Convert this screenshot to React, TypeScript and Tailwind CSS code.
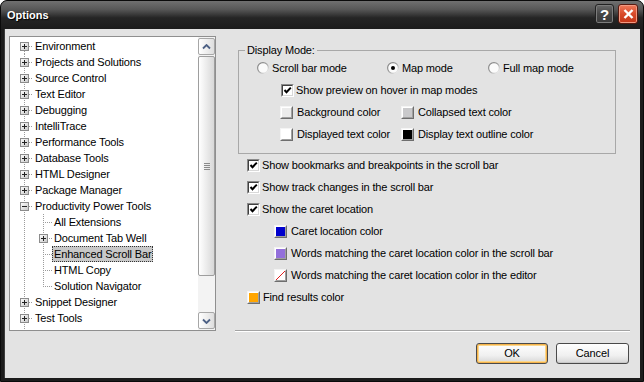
import React from "react";

type TreeNode = {
  label: string;
  level: 0 | 1;
  exp?: "plus" | "minus";
  first?: boolean;
  lastChild?: boolean;
  selected?: boolean;
};

const tree: TreeNode[] = [
  { label: "Environment", level: 0, exp: "plus", first: true },
  { label: "Projects and Solutions", level: 0, exp: "plus" },
  { label: "Source Control", level: 0, exp: "plus" },
  { label: "Text Editor", level: 0, exp: "plus" },
  { label: "Debugging", level: 0, exp: "plus" },
  { label: "IntelliTrace", level: 0, exp: "plus" },
  { label: "Performance Tools", level: 0, exp: "plus" },
  { label: "Database Tools", level: 0, exp: "plus" },
  { label: "HTML Designer", level: 0, exp: "plus" },
  { label: "Package Manager", level: 0, exp: "plus" },
  { label: "Productivity Power Tools", level: 0, exp: "minus" },
  { label: "All Extensions", level: 1 },
  { label: "Document Tab Well", level: 1, exp: "plus" },
  { label: "Enhanced Scroll Bar", level: 1, selected: true },
  { label: "HTML Copy", level: 1 },
  { label: "Solution Navigator", level: 1, lastChild: true },
  { label: "Snippet Designer", level: 0, exp: "plus" },
  { label: "Test Tools", level: 0, exp: "plus" },
];

const DOT = "#9c9c9c";

function Expander({ x, minus }: { x: number; minus?: boolean }) {
  // 9x9 box centred on column x
  return (
    <g>
      <defs>
        <linearGradient id="expg" x1="0" y1="0" x2="1" y2="1">
          <stop offset="0" stopColor="#ffffff" />
          <stop offset="1" stopColor="#c6c6c6" />
        </linearGradient>
      </defs>
      <rect x={x - 3.5} y={4.5} width={8} height={8} fill="url(#expg)" stroke="#8c8c8c" />
      <line x1={x - 2} y1={8.5} x2={x + 3} y2={8.5} stroke="#222" />
      {!minus && <line x1={x + 0.5} y1={6} x2={x + 0.5} y2={11} stroke="#222" />}
    </g>
  );
}

function Guide({ node }: { node: TreeNode }) {
  const w = node.level === 0 ? 23 : 42;
  return (
    <svg width={w} height={16} className="shrink-0" shapeRendering="crispEdges">
      {/* root line */}
      <line x1={14.5} y1={node.first ? 9 : 0} x2={14.5} y2={16} stroke={DOT} strokeDasharray="1 1" />
      {node.level === 0 && <line x1={19} y1={8.5} x2={23} y2={8.5} stroke={DOT} strokeDasharray="1 1" />}
      {node.level === 1 && (
        <>
          <line x1={33.5} y1={0} x2={33.5} y2={node.lastChild ? 9 : 16} stroke={DOT} strokeDasharray="1 1" />
          <line x1={35} y1={8.5} x2={42} y2={8.5} stroke={DOT} strokeDasharray="1 1" />
        </>
      )}
      {node.exp && <Expander x={node.level === 0 ? 14 : 33} minus={node.exp === "minus"} />}
    </svg>
  );
}

function Arrow({ down }: { down?: boolean }) {
  return (
    <svg width="9" height="6" viewBox="0 0 9 6">
      <path
        d={down ? "M1 1.5 L4.5 5 L8 1.5" : "M1 4.5 L4.5 1 L8 4.5"}
        fill="none"
        stroke="#4d6185"
        strokeWidth="1.8"
      />
    </svg>
  );
}

function ScrollButton({ down }: { down?: boolean }) {
  return (
    <div className="flex h-[17px] items-center justify-center rounded-[2px] border border-[#a7a7a7] bg-[linear-gradient(90deg,#ffffff,#dedede)]">
      <Arrow down={down} />
    </div>
  );
}

function TreePanel() {
  return (
    <div className="flex h-[295px] w-[207px] border border-[#8f8f8f] bg-white">
      <div className="flex-1 overflow-hidden pt-[1px]">
        {tree.map((n) => (
          <div key={n.label} className="flex h-[16px] items-center">
            <Guide node={n} />
            <span
              className={`h-[16px] whitespace-nowrap px-[1px] leading-[14px] border ${
                n.selected ? "border-dotted border-[#333] bg-[#c8c8c8]" : "border-transparent"
              }`}
            >
              {n.label}
            </span>
          </div>
        ))}
        <div className="flex h-[16px]">
          <svg width={23} height={16} shapeRendering="crispEdges">
            <line x1={14.5} y1={0} x2={14.5} y2={16} stroke={DOT} strokeDasharray="1 1" />
          </svg>
        </div>
      </div>
      <div className="flex w-[17px] flex-col bg-[#f3f3f3] py-[1px]">
        <ScrollButton />
        <div className="flex-1 pt-[1px] pb-[36px]">
          <div className="flex h-full items-center justify-center rounded-[2px] border border-[#9e9e9e] bg-[linear-gradient(90deg,#ffffff,#d8d8d8)]">
            <div className="flex flex-col gap-[1px]">
              <div className="h-px w-[6px] bg-[#8a8a8a]" />
              <div className="h-px w-[6px] bg-[#8a8a8a]" />
              <div className="h-px w-[6px] bg-[#8a8a8a]" />
              <div className="h-px w-[6px] bg-[#8a8a8a]" />
            </div>
          </div>
        </div>
        <ScrollButton down />
      </div>
    </div>
  );
}

function CheckBox({ checked }: { checked?: boolean }) {
  return (
    <div className="h-[13px] w-[13px] shrink-0 border border-t-[#8a8a8a] border-l-[#8a8a8a] border-b-white border-r-white">
      <div className="h-full w-full border border-t-[#404040] border-l-[#404040] border-b-[#d8d8d8] border-r-[#d8d8d8] bg-white">
        {checked && (
          <svg width="9" height="9" viewBox="0 0 9 9">
            <path d="M1.5 4 L3.5 6.2 L7.8 1.6" fill="none" stroke="#000" strokeWidth="2" />
          </svg>
        )}
      </div>
    </div>
  );
}

function Radio({ checked }: { checked?: boolean }) {
  return (
    <svg width="12" height="12" viewBox="0 0 12 12" className="shrink-0">
      <defs>
        <linearGradient id="rad" x1="0" y1="0" x2="1" y2="1">
          <stop offset="0" stopColor="#7a7a7a" />
          <stop offset="0.5" stopColor="#a0a0a0" />
          <stop offset="1" stopColor="#ffffff" />
        </linearGradient>
      </defs>
      <circle cx="6" cy="6" r="5.4" fill="#fbfbfb" stroke="url(#rad)" strokeWidth="1.2" />
      {checked && <circle cx="6" cy="6" r="2" fill="#000" />}
    </svg>
  );
}

function Swatch({ color, transparent }: { color: string; transparent?: boolean }) {
  return (
    <div className="h-[13px] w-[13px] shrink-0 border border-t-[#f4f4f4] border-l-[#f4f4f4] border-b-[#6e6e6e] border-r-[#6e6e6e]">
      <div
        className="h-full w-full border border-t-white border-l-white border-b-[#a0a0a0] border-r-[#a0a0a0]"
        style={{ background: color }}
      >
        {transparent && (
          <svg width="9" height="9" viewBox="0 0 9 9">
            <line x1="0" y1="9" x2="9" y2="0" stroke="#e02020" strokeWidth="1" />
          </svg>
        )}
      </div>
    </div>
  );
}

function Button({ label, isDefault }: { label: string; isDefault?: boolean }) {
  return (
    <div
      className={`flex h-[21px] items-center justify-center rounded-[3px] border border-[#4a4a4a] bg-[linear-gradient(#ffffff,#f0f0f0_60%,#d6d6d6)] ${
        isDefault
          ? "w-[72px] shadow-[inset_0_0_0_1px_#f5b24a,inset_0_0_0_2px_#fbd88e]"
          : "w-[73px] shadow-[inset_0_-1px_0_#c8c8c8]"
      }`}
    >
      {label}
    </div>
  );
}

function TitleBar() {
  return (
    <div className="flex h-[28px] shrink-0 items-center bg-[linear-gradient(#707070,#575757_30%,#3a3a3a_48%,#252525_60%,#1c1c1c)] pl-[6px] pr-[5px]">
      <span className="flex-1 text-[11px] font-bold tracking-normal text-white [text-shadow:1px_1px_1px_#000]">
        Options
      </span>
      <div className="flex gap-[4px] pb-[2px]">
        <div className="flex h-[20px] w-[19px] items-center justify-center rounded-[3px] border border-[#222] bg-[linear-gradient(#6a6a6a,#464646_50%,#3a3a3a)] text-[15px] font-bold leading-none text-white shadow-[inset_0_0_0_1px_#7c7c7c]">
          ?
        </div>
        <div className="flex h-[20px] w-[20px] items-center justify-center rounded-[3px] border border-[#5a1a10] bg-[linear-gradient(#ee7a5c,#d94a2a_50%,#c23518)] shadow-[inset_0_0_0_1px_#f29a82]">
          <svg width="11" height="10" viewBox="0 0 11 10">
            <path d="M1.5 1 L9.5 9 M9.5 1 L1.5 9" stroke="#fff" strokeWidth="2.4" />
          </svg>
        </div>
      </div>
    </div>
  );
}

export default function App() {
  return (
    <div className="h-[382px] w-[644px] bg-white font-['Liberation_Sans',Arial,sans-serif] text-[11px] tracking-[-0.15px] text-black">
      <div className="flex h-full flex-col overflow-hidden rounded-t-[7px] border border-[#0a0a0a] bg-[#1c1c1c]">
        <TitleBar />
        <div className="mx-[3px] mb-[3px] flex flex-1 border-l border-[#3c3c3c] bg-[#e3e3e3]">
          <div className="pt-[7px] pl-[4px]">
            <TreePanel />
          </div>

          <div className="ml-[19px] flex w-[395px] flex-col pt-[15px]">
            <fieldset className="ml-[3px] w-[378px] border border-[#a8a8a8] pb-[8px]">
              <legend className="ml-[6px] px-[2px] leading-[13px]">Display Mode:</legend>
              <div className="flex h-[22px] items-center pl-[18px]">
                <div className="flex w-[130px] items-center gap-[3px]">
                  <Radio />
                  <span>Scroll bar mode</span>
                </div>
                <div className="flex w-[101px] items-center gap-[3px]">
                  <Radio checked />
                  <span>Map mode</span>
                </div>
                <div className="flex items-center gap-[3px]">
                  <Radio />
                  <span>Full map mode</span>
                </div>
              </div>
              <div className="flex h-[22px] items-center gap-[2px] pl-[42px]">
                <CheckBox checked />
                <span>Show preview on hover in map modes</span>
              </div>
              <div className="flex h-[22px] items-center pl-[41px]">
                <div className="flex w-[121px] items-center gap-[4px]">
                  <Swatch color="#ebebeb" />
                  <span>Background color</span>
                </div>
                <div className="flex items-center gap-[4px]">
                  <Swatch color="#c9c9cb" />
                  <span>Collapsed text color</span>
                </div>
              </div>
              <div className="flex h-[22px] items-center pl-[41px]">
                <div className="flex w-[121px] items-center gap-[4px]">
                  <Swatch color="#ffffff" />
                  <span>Displayed text color</span>
                </div>
                <div className="flex items-center gap-[4px]">
                  <Swatch color="#000000" />
                  <span>Display text outline color</span>
                </div>
              </div>
            </fieldset>

            <div className="flex flex-col">
              <div className="flex h-[22px] items-center gap-[2px] pl-[12px]">
                <CheckBox checked />
                <span>Show bookmarks and breakpoints in the scroll bar</span>
              </div>
              <div className="flex h-[22px] items-center gap-[2px] pl-[12px]">
                <CheckBox checked />
                <span>Show track changes in the scroll bar</span>
              </div>
              <div className="flex h-[22px] items-center gap-[2px] pl-[12px]">
                <CheckBox checked />
                <span>Show the caret location</span>
              </div>
              <div className="flex h-[22px] items-center gap-[4px] pl-[39px]">
                <Swatch color="#0000cd" />
                <span>Caret location color</span>
              </div>
              <div className="flex h-[22px] items-center gap-[4px] pl-[39px]">
                <Swatch color="#9370db" />
                <span>Words matching the caret location color in the scroll bar</span>
              </div>
              <div className="flex h-[22px] items-center gap-[4px] pl-[39px]">
                <Swatch color="#ffffff" transparent />
                <span>Words matching the caret location color in the editor</span>
              </div>
              <div className="flex h-[22px] items-center gap-[3px] pl-[12px]">
                <Swatch color="#ffa500" />
                <span>Find results color</span>
              </div>
            </div>

            <div className="mt-auto border-t border-b border-t-[#a3a3a3] border-b-white" />
            <div className="mt-[11px] mb-[14px] flex justify-end gap-[8px] pr-[1px]">
              <Button label="OK" isDefault />
              <Button label="Cancel" />
            </div>
          </div>
        </div>
      </div>
    </div>
  );
}
